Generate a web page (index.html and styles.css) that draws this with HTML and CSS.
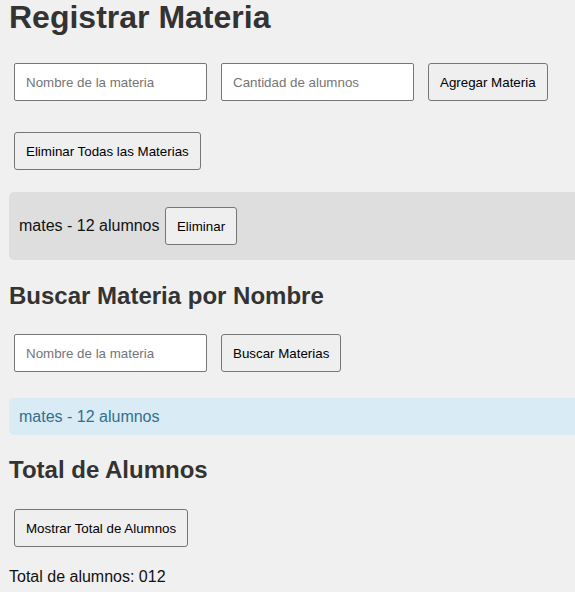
FILE: index.html
```html
<!DOCTYPE html>
<html lang="es">
<head>
<meta charset="utf-8">
<title>Registrar Materia</title>
<link rel="stylesheet" href="styles.css">
</head>
<body>
  <h1 class="title">Registrar Materia</h1>
  <div class="row row-add">
    <input class="field" type="text" placeholder="Nombre de la materia">
    <input class="field" type="text" placeholder="Cantidad de alumnos">
    <button class="btn">Agregar Materia</button>
  </div>
  <div class="row row-clear">
    <button class="btn">Eliminar Todas las Materias</button>
  </div>
  <ul class="list">
    <li class="item">mates - 12 alumnos <button class="btn">Eliminar</button></li>
  </ul>

  <h2 class="subtitle subtitle-search">Buscar Materia por Nombre</h2>
  <div class="row row-search">
    <input class="field" type="text" placeholder="Nombre de la materia">
    <button class="btn">Buscar Materias</button>
  </div>
  <div class="result">mates - 12 alumnos</div>

  <h2 class="subtitle subtitle-total">Total de Alumnos</h2>
  <div class="row row-total">
    <button class="btn">Mostrar Total de Alumnos</button>
  </div>
  <p class="total">Total de alumnos: 012</p>
</body>
</html>
```
FILE: styles.css
```css
html, body {
  overflow-x: hidden;
}
body {
  margin: 0;
  padding: 0 0 0 9px;
  background: #f0f0f0;
  font-family: "Liberation Sans", Arial, sans-serif;
  color: #222;
  font-size: 16px;
}
.title {
  margin: 0;
  font-size: 32px;
  line-height: 35px;
  font-weight: bold;
  color: #333;
}
.subtitle {
  margin: 0;
  font-size: 24px;
  line-height: 28px;
  font-weight: bold;
  color: #333;
}
.subtitle-search { margin-top: 22px; }
.subtitle-total { margin-top: 21px; }

.row {
  display: flex;
  align-items: flex-start;
  gap: 4px;
}
.row-add { margin-top: 23px; }
.row-clear { margin-top: 21px; }
.row-search { margin-top: 19px; }
.row-total { margin-top: 20px; }

.field {
  box-sizing: border-box;
  width: 193px;
  height: 38px;
  margin: 5px;
  padding: 10px 10px 10px 11px;
  border: 1px solid #767676;
  border-radius: 2px;
  background: #fff;
  font-family: "Liberation Sans", Arial, sans-serif;
  font-size: 13.33px;
  color: #222;
}
.field::placeholder {
  color: #757575;
}
.btn {
  box-sizing: border-box;
  height: 38px;
  margin: 5px;
  padding: 0 11px;
  border: 1px solid #767676;
  border-radius: 3px;
  background: #efefef;
  font-family: "Liberation Sans", Arial, sans-serif;
  font-size: 13.33px;
  color: #000;
}

.list {
  list-style: none;
  margin: 17px -12px 0 0;
  padding: 0;
}
.item {
  padding: 10px;
  background: #dedede;
  border-radius: 5px;
  line-height: 48px;
  font-size: 16px;
  color: #111;
}
.item .btn {
  margin: 5px 0 5px 1px;
  vertical-align: top;
}

.result {
  margin: 21px -12px 0 0;
  padding: 10px;
  background: #d9ebf5;
  color: #31708f;
  border-radius: 5px;
  font-size: 16px;
  line-height: 17px;
}

.total {
  margin: 16px 0 0;
  font-size: 16px;
  line-height: 18px;
  color: #111;
}
```
